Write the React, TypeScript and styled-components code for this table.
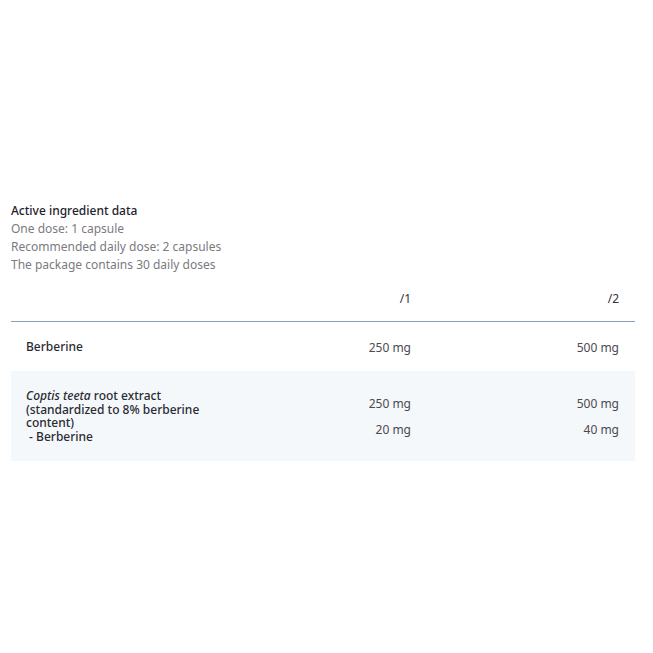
import styled, { createGlobalStyle } from 'styled-components';

const GlobalStyle = createGlobalStyle`
    html, body {
        margin: 0;
        padding: 0;
        background: #ffffff;
    }
    body {
        font-family: 'Noto Sans', 'Open Sans', sans-serif;
    }
`;

type Row = {
    label: React.ReactNode;
    one: string[];
    two: string[];
    shaded?: boolean;
};

const rows: Row[] = [
    { label: 'Berberine', one: ['250 mg'], two: ['500 mg'] },
    {
        label: (
            <>
                <em>Coptis teeta</em> root extract
                <br />
                (standardized to 8% berberine content)
                <br />
                &nbsp;- Berberine
            </>
        ),
        one: ['250 mg', '20 mg'],
        two: ['500 mg', '40 mg'],
        shaded: true,
    },
];

export default function App() {
    return (
        <Page>
            <GlobalStyle />
            <Intro>
                <Title>Active ingredient data</Title>
                <Info>One dose: 1 capsule</Info>
                <Info>Recommended daily dose: 2 capsules</Info>
                <Info>The package contains 30 daily doses</Info>
            </Intro>
            <Table>
                <HeadRow>
                    <span />
                    <HeadCell>/1</HeadCell>
                    <HeadCell>/2</HeadCell>
                </HeadRow>
                {rows.map((r, i) => (
                    <BodyRow key={i} shaded={r.shaded}>
                        <Label tall={r.shaded}>{r.label}</Label>
                        <Values>
                            {r.one.map(v => (
                                <Value key={v}>{v}</Value>
                            ))}
                        </Values>
                        <Values>
                            {r.two.map(v => (
                                <Value key={v}>{v}</Value>
                            ))}
                        </Values>
                    </BodyRow>
                ))}
            </Table>
        </Page>
    );
}

const Page = styled.div`
    width: 653px;
    height: 653px;
    box-sizing: border-box;
    padding: 202px 18px 0 11px;
`;

const Intro = styled.div`
    display: flex;
    flex-direction: column;
`;

const Title = styled.div`
    font-size: 12px;
    line-height: 18px;
    font-weight: 500;
    color: #23232b;
`;

const Info = styled.div`
    font-size: 12px;
    line-height: 18px;
    color: #7a7a7f;
`;

const Table = styled.div`
    width: 624px;
`;

const Grid = styled.div`
    display: grid;
    grid-template-columns: 190px 195px 208px;
    padding: 0 16px 0 15px;
`;

const HeadRow = styled(Grid)`
    height: 48px;
    padding-top: 1px;
    box-sizing: border-box;
    align-items: center;
    border-bottom: 1px solid #8a9fb6;
`;

const HeadCell = styled.div`
    text-align: right;
    font-size: 12px;
    color: #33333a;
`;

const BodyRow = styled(Grid)<{ shaded?: boolean }>`
    align-items: center;
    background: ${p => (p.shaded ? '#f4f8fb' : 'transparent')};
    padding-top: ${p => (p.shaded ? '18px' : '0')};
    padding-bottom: ${p => (p.shaded ? '18px' : '0')};
    min-height: 49px;
    box-sizing: border-box;
`;

const Label = styled.div<{ tall?: boolean }>`
    font-size: 12px;
    line-height: ${p => (p.tall ? '13.5px' : '18px')};
    font-weight: 500;
    color: #2a2a33;

    em {
        font-style: italic;
    }
`;

const Values = styled.div`
    display: flex;
    flex-direction: column;
    align-items: flex-end;
    gap: 12px;
    padding-top: 2px;
`;

const Value = styled.div`
    font-size: 12px;
    line-height: 14px;
    color: #4a4a50;
`;
